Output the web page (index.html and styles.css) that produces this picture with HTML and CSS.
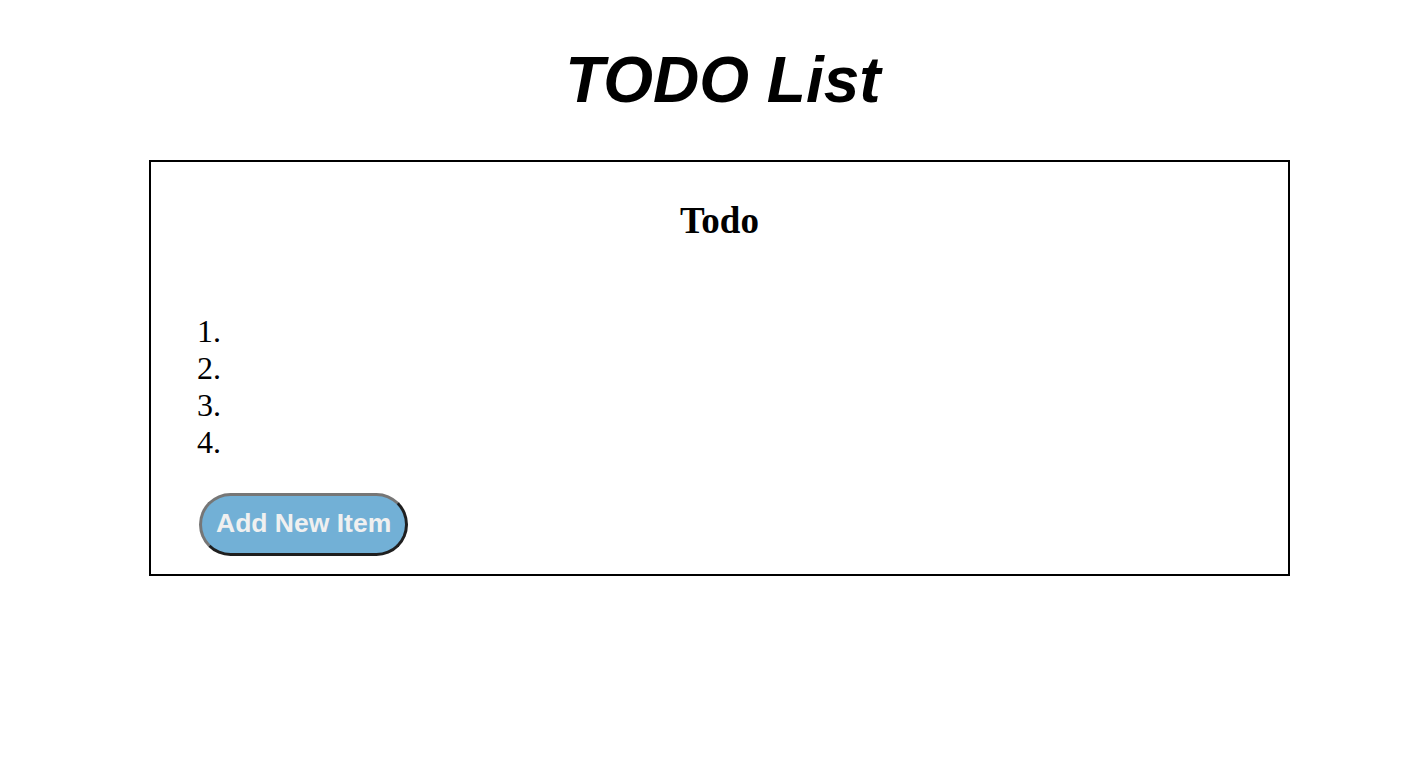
FILE: index.html
```html
<!DOCTYPE html>
<html lang="en">
<head>
<meta charset="utf-8">
<title>TODO List</title>
<link rel="stylesheet" href="styles.css">
</head>
<body>
<h1 class="page-title">TODO List</h1>
<section class="todo-card">
  <h2 class="card-title">Todo</h2>
  <ol class="todo-list">
    <li></li>
    <li></li>
    <li></li>
    <li></li>
  </ol>
  <div class="actions">
    <button class="add-btn" type="button">Add New Item</button>
  </div>
</section>
</body>
</html>
```
FILE: styles.css
```css
html, body {
  background: #ffffff;
}
body {
  margin: 8px;
  font-family: "Liberation Serif", "Times New Roman", serif;
  color: #000;
}
.page-title {
  font-family: "Liberation Sans", Arial, Helvetica, sans-serif;
  font-size: 64px;
  font-weight: bold;
  font-style: italic;
  text-align: center;
  margin: 34.9px 0 42.9px;
  padding-left: 32px;
}
.todo-card {
  box-sizing: border-box;
  width: 1141px;
  margin-left: 141px;
  border: 2px solid #000;
  padding: 37px 48px 18px 48px;
}
.card-title {
  margin: 0;
  font-size: 37px;
  font-weight: bold;
  text-align: center;
}
.todo-list {
  margin: 71px 0 0 -2px;
  padding: 0;
  font-size: 32px;
  line-height: 37px;
}
.todo-list li {
  list-style-position: inside;
  height: 37px;
}
.actions {
  margin-top: 32.3px;
}
.add-btn {
  box-sizing: border-box;
  height: 63px;
  padding: 0 14px 3px;
  font-family: "Liberation Sans", Arial, Helvetica, sans-serif;
  font-size: 26.5px;
  font-weight: bold;
  color: #f0f0f0;
  background: #72b0d6;
  border: 3px solid;
  border-color: #767676 #1f1f1f #1f1f1f #767676;
  border-radius: 32px;
  cursor: pointer;
}
```
